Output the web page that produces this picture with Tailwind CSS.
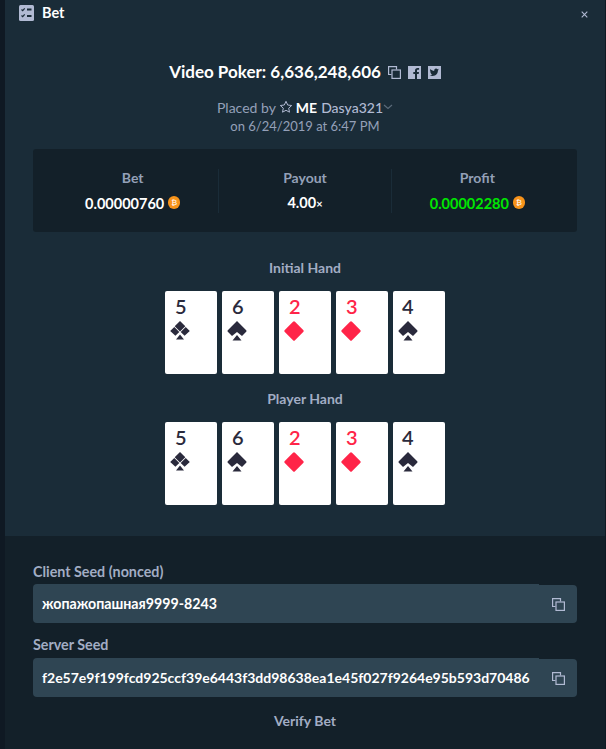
<!DOCTYPE html>
<html lang="en">
<head>
<meta charset="UTF-8">
<title>Bet</title>
<script src="https://cdn.jsdelivr.net/npm/@tailwindcss/browser@4"></script>
</head>
<body class="bg-[#0f1923] font-[Lato,sans-serif] overflow-hidden">
<div class="ml-[5px] w-[600px] h-[749px] flex flex-col">

  <!-- top section -->
  <div class="bg-[#1a2c38] h-[536px] shrink-0 flex flex-col items-center">
    <div class="w-full h-[30px] pl-[14px] pr-[17px] pt-[5px] flex items-start justify-between">
      <div class="flex items-center gap-[8px]">
        <svg width="15" height="16" viewBox="0 0 15 16">
          <rect width="15" height="16" rx="1.5" fill="#b1bad3"/>
          <path d="M2.5 4.5l1.2 1.2 2-2.4M2.5 10.500l1.200 1.200 2-2.400" fill="none" stroke="#1a2c38" stroke-width="1.2"/>
          <path d="M8 4.500h4.500M8 11h4.500" stroke="#1a2c38" stroke-width="1.8"/>
        </svg>
        <span class="-mt-px text-white text-[14.5px] font-bold leading-[16px]">Bet</span>
      </div>
      <svg class="mt-[6px]" width="7" height="7" viewBox="0 0 7 7"><path d="M.7.7l5.600 5.600M6.300.7L.7 6.300" stroke="#b1bad3" stroke-width="1.100"/></svg>
    </div>

    <div class="mt-[32px] flex items-center h-[20px]">
      <span class="text-white text-[17px] font-bold">Video Poker: 6,636,248,606</span>
      <svg class="ml-[7px]" width="13" height="13" viewBox="0 0 13 13" fill="none" stroke="#b1bad3" stroke-width="1.200"><path d="M3.500 8.500H.6V.6h7.900v2.900"/><rect x="4" y="4" width="8.400" height="8.400"/></svg>
      <svg class="ml-[7px]" width="13" height="13" viewBox="0 0 13 13"><rect width="13" height="13" fill="#b1bad3"/><path d="M9 13V8h1.700l.3-2H9V4.800c0-.6.2-1 1-1h1.100V2.100C10.800 2 10.200 2 9.600 2 8 2 7 3 7 4.600V6H5.300v2H7v5z" fill="#1a2c38"/></svg>
      <svg class="ml-[7px]" width="13" height="13" viewBox="0 0 13 13"><rect width="13" height="13" fill="#b1bad3"/><path d="M11 3.500c-.4.200-.7.300-1.100.3.400-.2.700-.6.800-1-.4.200-.8.400-1.200.5a1.900 1.900 0 0 0-3.300 1.700C4.600 4.900 3.200 4.100 2.300 3a1.900 1.900 0 0 0 .6 2.500c-.3 0-.6-.1-.8-.2 0 .9.600 1.700 1.500 1.900-.3.100-.6.100-.9 0 .3.800 1 1.300 1.800 1.300-.8.600-1.800.9-2.800.8.900.5 1.800.8 2.900.8 3.400 0 5.400-2.900 5.300-5.500.4-.3.800-.6 1.100-1.100z" fill="#1a2c38"/></svg>
    </div>

    <div class="mt-[16px] flex items-center h-[18px] text-[14px] text-[#94a0b8]">
      <span>Placed by</span>
      <svg class="ml-[3px]" width="14" height="14" viewBox="0 0 14 14"><path d="M7 1.300l1.700 3.700 4 .5-3 2.700.8 4L7 10.300l-3.500 1.900.8-4-3-2.700 4-.5z" fill="none" stroke="#b1bad3" stroke-width="1"/></svg>
      <span class="ml-[3px] text-white font-bold">ME</span>
      <span class="ml-[4px] text-[#b1bad3] font-medium">Dasya321</span>
      <svg width="10" height="6" viewBox="0 0 10 6"><path d="M1 1l4 3.500L9 1" fill="none" stroke="#5b6b7a" stroke-width="1.200"/></svg>
    </div>
    <div class="mt-[1px] h-[18px] leading-[18px] text-[13px] text-[#94a0b8]">on 6/24/2019 at 6:47 PM</div>

    <div class="mt-[14px] w-[544px] h-[83px] bg-[#132029] rounded-[3px] px-[14px] flex items-center">
      <div class="flex-1 h-[44px] flex flex-col items-center justify-between">
        <span class="text-[14px] font-bold text-[#94a0b8] leading-[18px]">Bet</span>
        <div class="flex items-center gap-[4px]">
          <span class="text-[14.5px] font-bold text-white leading-[18px]">0.00000760</span>
          <span class="w-[12px] h-[13px] -mt-[2px] rounded-full bg-[#f7931a] text-white text-[8px] leading-[13px] text-center font-[DejaVu_Sans,sans-serif]">₿</span>
        </div>
      </div>
      <div class="w-px h-[44px] bg-[#1a2c38]"></div>
      <div class="flex-1 h-[44px] flex flex-col items-center justify-between">
        <span class="text-[14px] font-bold text-[#94a0b8] leading-[18px]">Payout</span>
        <span class="text-[14.5px] font-bold text-white leading-[18px]">4.00<span class="text-[11px]">×</span></span>
      </div>
      <div class="w-px h-[44px] bg-[#1a2c38]"></div>
      <div class="flex-1 h-[44px] flex flex-col items-center justify-between">
        <span class="text-[14px] font-bold text-[#94a0b8] leading-[18px]">Profit</span>
        <div class="flex items-center gap-[4px]">
          <span class="text-[14.5px] font-bold text-[#00e701] leading-[18px]">0.00002280</span>
          <span class="w-[12px] h-[13px] -mt-[2px] rounded-full bg-[#f7931a] text-white text-[8px] leading-[13px] text-center font-[DejaVu_Sans,sans-serif]">₿</span>
        </div>
      </div>
    </div>

    <div class="mt-[27px] h-[18px] leading-[18px] text-[14px] font-bold text-[#a2adc4]">Initial Hand</div>
    <div class="mt-[14px] flex gap-[5px]">
      <div class="w-[52px] h-[83px] bg-white rounded-[2px] pl-[10px] pt-[4px]">
        <div class="text-[20px] leading-[22px] font-semibold text-[#2a2a3c]">5</div>
        <svg class="mt-[4px] -ml-[5px]" width="20" height="20" viewBox="0 0 20 20" fill="#2a2a3c"><path d="M10 0l5.300 5.300L10 10.600 4.700 5.300zM4.300 5.900l5 5-3.900 3.900L.2 10zM15.700 5.900l-5 5 3.900 3.900L19.800 10zM10 13.500l4 5H6z"/></svg>
      </div>
      <div class="w-[52px] h-[83px] bg-white rounded-[2px] pl-[10px] pt-[4px]">
        <div class="text-[20px] leading-[22px] font-semibold text-[#2a2a3c]">6</div>
        <svg class="mt-[4px] -ml-[5px]" width="20" height="20" viewBox="0 0 20 20" fill="#2a2a3c"><path d="M10 0l9.200 9.200q.8.800 0 1.600L15 15l-5-4-5 4L.8 10.800q-.8-.8 0-1.600zM10 14l4.500 5.500h-9z"/></svg>
      </div>
      <div class="w-[52px] h-[83px] bg-white rounded-[2px] pl-[10px] pt-[4px]">
        <div class="text-[20px] leading-[22px] font-semibold text-[#ff2448]">2</div>
        <svg class="mt-[4px] -ml-[5px]" width="20" height="20" viewBox="0 0 20 20" fill="#ff2448"><path d="M9 .8q1-1 2 0l8.200 8.200q1 1 0 2L11 19.200q-1 1-2 0L.8 11q-1-1 0-2z"/></svg>
      </div>
      <div class="w-[52px] h-[83px] bg-white rounded-[2px] pl-[10px] pt-[4px]">
        <div class="text-[20px] leading-[22px] font-semibold text-[#ff2448]">3</div>
        <svg class="mt-[4px] -ml-[5px]" width="20" height="20" viewBox="0 0 20 20" fill="#ff2448"><path d="M9 .8q1-1 2 0l8.200 8.200q1 1 0 2L11 19.200q-1 1-2 0L.8 11q-1-1 0-2z"/></svg>
      </div>
      <div class="w-[52px] h-[83px] bg-white rounded-[2px] pl-[9px] pt-[4px]">
        <div class="text-[20px] leading-[22px] font-semibold text-[#2a2a3c]">4</div>
        <svg class="mt-[4px] -ml-[4px]" width="20" height="20" viewBox="0 0 20 20" fill="#2a2a3c"><path d="M10 0l9.200 9.200q.8.800 0 1.600L15 15l-5-4-5 4L.8 10.800q-.8-.8 0-1.600zM10 14l4.500 5.500h-9z"/></svg>
      </div>
    </div>

    <div class="mt-[16px] h-[18px] leading-[18px] text-[14px] font-bold text-[#a2adc4]">Player Hand</div>
    <div class="mt-[14px] flex gap-[5px]">
      <div class="w-[52px] h-[83px] bg-white rounded-[2px] pl-[10px] pt-[4px]">
        <div class="text-[20px] leading-[22px] font-semibold text-[#2a2a3c]">5</div>
        <svg class="mt-[4px] -ml-[5px]" width="20" height="20" viewBox="0 0 20 20" fill="#2a2a3c"><path d="M10 0l5.300 5.300L10 10.600 4.700 5.300zM4.300 5.900l5 5-3.900 3.900L.2 10zM15.700 5.900l-5 5 3.900 3.900L19.800 10zM10 13.500l4 5H6z"/></svg>
      </div>
      <div class="w-[52px] h-[83px] bg-white rounded-[2px] pl-[10px] pt-[4px]">
        <div class="text-[20px] leading-[22px] font-semibold text-[#2a2a3c]">6</div>
        <svg class="mt-[4px] -ml-[5px]" width="20" height="20" viewBox="0 0 20 20" fill="#2a2a3c"><path d="M10 0l9.200 9.200q.8.800 0 1.600L15 15l-5-4-5 4L.8 10.800q-.8-.8 0-1.600zM10 14l4.500 5.500h-9z"/></svg>
      </div>
      <div class="w-[52px] h-[83px] bg-white rounded-[2px] pl-[10px] pt-[4px]">
        <div class="text-[20px] leading-[22px] font-semibold text-[#ff2448]">2</div>
        <svg class="mt-[4px] -ml-[5px]" width="20" height="20" viewBox="0 0 20 20" fill="#ff2448"><path d="M9 .8q1-1 2 0l8.200 8.200q1 1 0 2L11 19.200q-1 1-2 0L.8 11q-1-1 0-2z"/></svg>
      </div>
      <div class="w-[52px] h-[83px] bg-white rounded-[2px] pl-[10px] pt-[4px]">
        <div class="text-[20px] leading-[22px] font-semibold text-[#ff2448]">3</div>
        <svg class="mt-[4px] -ml-[5px]" width="20" height="20" viewBox="0 0 20 20" fill="#ff2448"><path d="M9 .8q1-1 2 0l8.200 8.200q1 1 0 2L11 19.200q-1 1-2 0L.8 11q-1-1 0-2z"/></svg>
      </div>
      <div class="w-[52px] h-[83px] bg-white rounded-[2px] pl-[9px] pt-[4px]">
        <div class="text-[20px] leading-[22px] font-semibold text-[#2a2a3c]">4</div>
        <svg class="mt-[4px] -ml-[4px]" width="20" height="20" viewBox="0 0 20 20" fill="#2a2a3c"><path d="M10 0l9.200 9.200q.8.800 0 1.600L15 15l-5-4-5 4L.8 10.800q-.8-.8 0-1.600zM10 14l4.500 5.500h-9z"/></svg>
      </div>
    </div>
  </div>

  <!-- seeds -->
  <div class="bg-[#132029] flex-1 pl-[28px] pr-[28px] pt-[27px]">
    <div class="h-[18px] leading-[18px] text-[14.3px] font-bold text-[#a2adc4]">Client Seed (nonced)</div>
    <div class="mt-[3px] flex items-stretch h-[39px]">
      <div class="flex-1 bg-[#2f4553] rounded-l-[4px] pl-[9px] flex items-center text-white text-[14.2px] font-bold">жопажопашная9999-8243</div>
      <div class="w-[38px] mt-px bg-[#2f4553] rounded-r-[4px] flex items-center pl-[13px]">
        <svg width="13" height="13" viewBox="0 0 13 13" fill="none" stroke="#b1bad3" stroke-width="1.200"><path d="M3.500 8.500H.6V.6h7.900v2.900"/><rect x="4" y="4" width="8.400" height="8.400"/></svg>
      </div>
    </div>
    <div class="mt-[13px] h-[18px] leading-[18px] text-[14.3px] font-bold text-[#a2adc4]">Server Seed</div>
    <div class="mt-[4px] flex items-stretch h-[39px]">
      <div class="flex-1 bg-[#2f4553] rounded-l-[4px] pl-[9px] flex items-center text-white text-[14px] font-bold">f2e57e9f199fcd925ccf39e6443f3dd98638ea1e45f027f9264e95b593d70486</div>
      <div class="w-[38px] mt-px bg-[#2f4553] rounded-r-[4px] flex items-center pl-[13px]">
        <svg width="13" height="13" viewBox="0 0 13 13" fill="none" stroke="#b1bad3" stroke-width="1.200"><path d="M3.500 8.500H.6V.6h7.900v2.900"/><rect x="4" y="4" width="8.400" height="8.400"/></svg>
      </div>
    </div>
    <div class="mt-[15px] h-[18px] leading-[18px] text-center text-[14px] font-bold text-[#a2adc4]">Verify Bet</div>
  </div>
</div>
</body>
</html>
